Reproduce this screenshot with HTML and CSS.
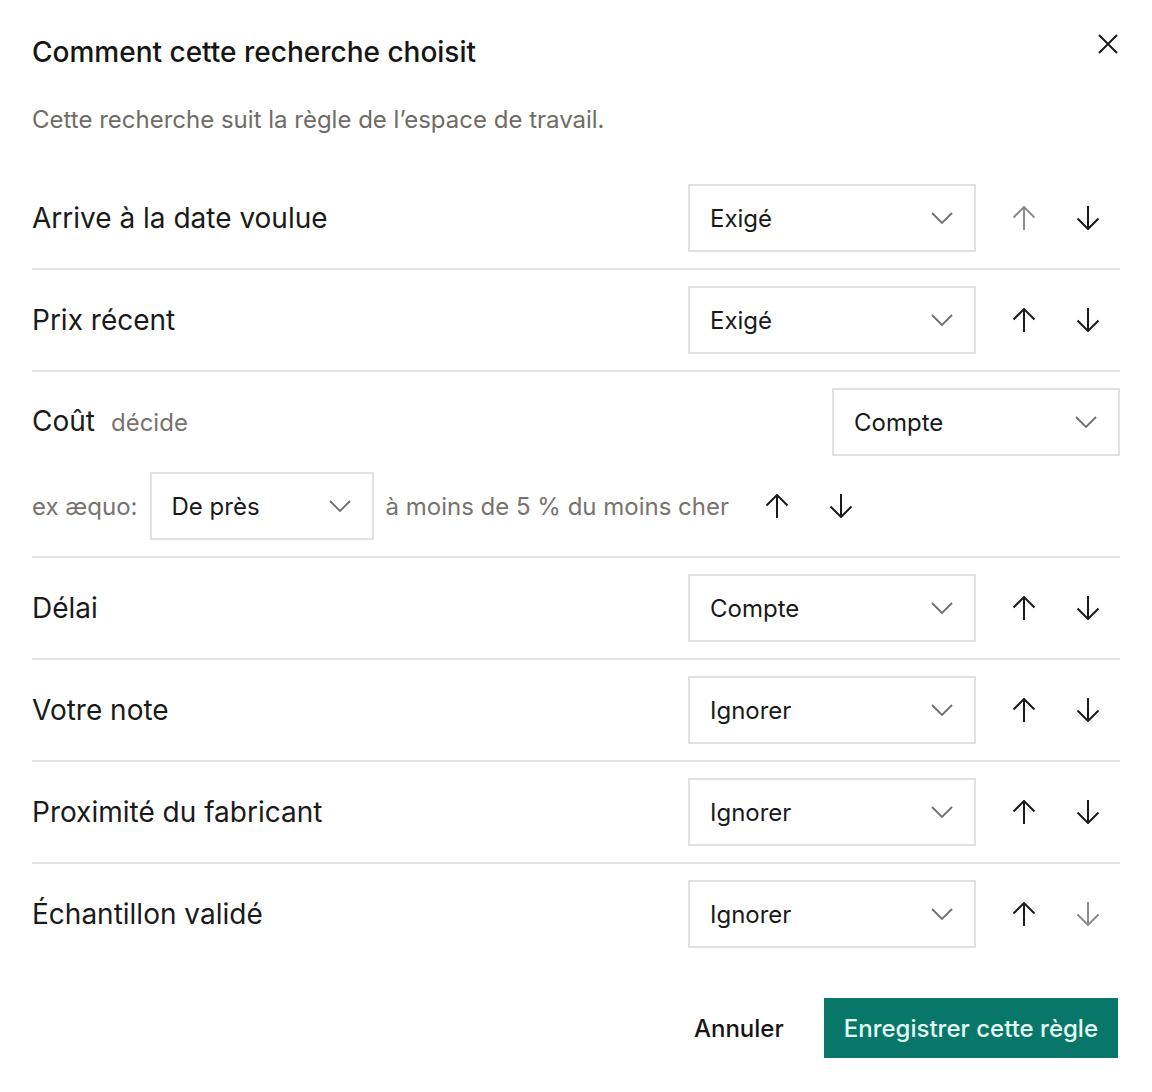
FILE: index.html
```html
<!DOCTYPE html>
<html lang="fr">
<head>
<meta charset="utf-8">
<title>Comment cette recherche choisit</title>
<link rel="stylesheet" href="styles.css">
</head>
<body>
<div class="dialog">
  <div class="header">
    <h2 class="title">Comment cette recherche choisit</h2>
    <button class="close" aria-label="Fermer">
      <svg width="20" height="20" viewBox="0 0 20 20"><path d="M1 1L19 19M19 1L1 19" stroke="#1a1a1a" stroke-width="2" fill="none"/></svg>
    </button>
  </div>
  <p class="subtitle">Cette recherche suit la règle de l’espace de travail.</p>

  <div class="rules">
    <div class="row">
      <span class="label">Arrive à la date voulue</span>
      <div class="controls">
        <div class="select"><span>Exigé</span><svg class="chev" width="22" height="12" viewBox="0 0 22 12"><polyline points="1,1 11,11 21,1" fill="none" stroke="#6f6f6f" stroke-width="1.8"/></svg></div>
        <div class="arrows">
          <button class="arrow disabled"><svg width="24" height="24" viewBox="0 0 24 24"><path d="M12 1V24M1.5 11.5L12 1L22.5 11.5" fill="none" stroke="currentColor" stroke-width="2"/></svg></button>
          <button class="arrow"><svg width="24" height="24" viewBox="0 0 24 24"><path d="M12 0V23M1.5 12.5L12 23L22.5 12.5" fill="none" stroke="currentColor" stroke-width="2"/></svg></button>
        </div>
      </div>
    </div>

    <div class="row">
      <span class="label">Prix récent</span>
      <div class="controls">
        <div class="select"><span>Exigé</span><svg class="chev" width="22" height="12" viewBox="0 0 22 12"><polyline points="1,1 11,11 21,1" fill="none" stroke="#6f6f6f" stroke-width="1.8"/></svg></div>
        <div class="arrows">
          <button class="arrow"><svg width="24" height="24" viewBox="0 0 24 24"><path d="M12 1V24M1.5 11.5L12 1L22.5 11.5" fill="none" stroke="currentColor" stroke-width="2"/></svg></button>
          <button class="arrow"><svg width="24" height="24" viewBox="0 0 24 24"><path d="M12 0V23M1.5 12.5L12 23L22.5 12.5" fill="none" stroke="currentColor" stroke-width="2"/></svg></button>
        </div>
      </div>
    </div>

    <div class="row row-cost">
      <div class="cost-head">
        <span class="label label-cost">Coût <span class="hint">décide</span></span>
        <div class="select"><span>Compte</span><svg class="chev" width="22" height="12" viewBox="0 0 22 12"><polyline points="1,1 11,11 21,1" fill="none" stroke="#6f6f6f" stroke-width="1.8"/></svg></div>
      </div>
      <div class="tie">
        <span class="muted">ex æquo:</span>
        <div class="select select-sm"><span>De près</span><svg class="chev" width="22" height="12" viewBox="0 0 22 12"><polyline points="1,1 11,11 21,1" fill="none" stroke="#6f6f6f" stroke-width="1.8"/></svg></div>
        <span class="muted tie-text">à moins de 5 % du moins cher</span>
        <div class="arrows">
          <button class="arrow"><svg width="24" height="24" viewBox="0 0 24 24"><path d="M12 1V24M1.5 11.5L12 1L22.5 11.5" fill="none" stroke="currentColor" stroke-width="2"/></svg></button>
          <button class="arrow"><svg width="24" height="24" viewBox="0 0 24 24"><path d="M12 0V23M1.5 12.5L12 23L22.5 12.5" fill="none" stroke="currentColor" stroke-width="2"/></svg></button>
        </div>
      </div>
    </div>

    <div class="row">
      <span class="label">Délai</span>
      <div class="controls">
        <div class="select"><span>Compte</span><svg class="chev" width="22" height="12" viewBox="0 0 22 12"><polyline points="1,1 11,11 21,1" fill="none" stroke="#6f6f6f" stroke-width="1.8"/></svg></div>
        <div class="arrows">
          <button class="arrow"><svg width="24" height="24" viewBox="0 0 24 24"><path d="M12 1V24M1.5 11.5L12 1L22.5 11.5" fill="none" stroke="currentColor" stroke-width="2"/></svg></button>
          <button class="arrow"><svg width="24" height="24" viewBox="0 0 24 24"><path d="M12 0V23M1.5 12.5L12 23L22.5 12.5" fill="none" stroke="currentColor" stroke-width="2"/></svg></button>
        </div>
      </div>
    </div>

    <div class="row">
      <span class="label">Votre note</span>
      <div class="controls">
        <div class="select"><span>Ignorer</span><svg class="chev" width="22" height="12" viewBox="0 0 22 12"><polyline points="1,1 11,11 21,1" fill="none" stroke="#6f6f6f" stroke-width="1.8"/></svg></div>
        <div class="arrows">
          <button class="arrow"><svg width="24" height="24" viewBox="0 0 24 24"><path d="M12 1V24M1.5 11.5L12 1L22.5 11.5" fill="none" stroke="currentColor" stroke-width="2"/></svg></button>
          <button class="arrow"><svg width="24" height="24" viewBox="0 0 24 24"><path d="M12 0V23M1.5 12.5L12 23L22.5 12.5" fill="none" stroke="currentColor" stroke-width="2"/></svg></button>
        </div>
      </div>
    </div>

    <div class="row">
      <span class="label">Proximité du fabricant</span>
      <div class="controls">
        <div class="select"><span>Ignorer</span><svg class="chev" width="22" height="12" viewBox="0 0 22 12"><polyline points="1,1 11,11 21,1" fill="none" stroke="#6f6f6f" stroke-width="1.8"/></svg></div>
        <div class="arrows">
          <button class="arrow"><svg width="24" height="24" viewBox="0 0 24 24"><path d="M12 1V24M1.5 11.5L12 1L22.5 11.5" fill="none" stroke="currentColor" stroke-width="2"/></svg></button>
          <button class="arrow"><svg width="24" height="24" viewBox="0 0 24 24"><path d="M12 0V23M1.5 12.5L12 23L22.5 12.5" fill="none" stroke="currentColor" stroke-width="2"/></svg></button>
        </div>
      </div>
    </div>

    <div class="row row-last">
      <span class="label">Échantillon validé</span>
      <div class="controls">
        <div class="select"><span>Ignorer</span><svg class="chev" width="22" height="12" viewBox="0 0 22 12"><polyline points="1,1 11,11 21,1" fill="none" stroke="#6f6f6f" stroke-width="1.8"/></svg></div>
        <div class="arrows">
          <button class="arrow"><svg width="24" height="24" viewBox="0 0 24 24"><path d="M12 1V24M1.5 11.5L12 1L22.5 11.5" fill="none" stroke="currentColor" stroke-width="2"/></svg></button>
          <button class="arrow disabled"><svg width="24" height="24" viewBox="0 0 24 24"><path d="M12 0V23M1.5 12.5L12 23L22.5 12.5" fill="none" stroke="currentColor" stroke-width="2"/></svg></button>
        </div>
      </div>
    </div>
  </div>

  <div class="footer">
    <button class="btn btn-ghost">Annuler</button>
    <button class="btn btn-primary">Enregistrer cette règle</button>
  </div>
</div>
</body>
</html>
```
FILE: styles.css
```css
* { box-sizing: border-box; }

html, body {
  margin: 0;
  padding: 0;
  background: #ffffff;
}

body {
  font-family: Inter, "Noto Sans", "Liberation Sans", sans-serif;
  color: #1a1a1a;
}

.dialog {
  padding: 34px 32px 34px 32px;
}

.header {
  display: flex;
  justify-content: space-between;
  align-items: flex-start;
}

.title {
  margin: 0;
  font-size: 28px;
  line-height: 36px;
  font-weight: 500;
  color: #161616;
}

.close {
  border: 0;
  background: none;
  padding: 0;
  margin: 0 2px 0 0;
  width: 20px;
  height: 20px;
  display: flex;
  cursor: pointer;
}

.subtitle {
  margin: 34px 0 32px 0;
  font-size: 24px;
  line-height: 32px;
  color: #6f6c67;
}

.rules {
  display: flex;
  flex-direction: column;
}

.row {
  display: flex;
  align-items: center;
  justify-content: space-between;
  padding: 16px 0;
  border-bottom: 2px solid #e4e3df;
}

.row-last {
  border-bottom: 0;
}

.label {
  font-size: 28px;
  line-height: 36px;
  color: #1a1a1a;
}

.label-cost {
  display: flex;
  align-items: baseline;
  gap: 16px;
}

.hint {
  font-size: 24px;
  color: #77736e;
}

.controls {
  display: flex;
  align-items: center;
  gap: 16px;
}

.select {
  width: 288px;
  height: 68px;
  border: 2px solid #e2e1dd;
  display: flex;
  align-items: center;
  justify-content: space-between;
  padding: 0 21px 0 20px;
  font-size: 24px;
  color: #1a1a1a;
  background: #fff;
}

.select-sm {
  width: 224px;
}

.chev {
  flex: none;
}

.arrows {
  display: flex;
}

.arrow {
  width: 64px;
  height: 48px;
  border: 0;
  background: none;
  padding: 0;
  display: flex;
  align-items: center;
  justify-content: center;
  color: #1a1a1a;
  cursor: pointer;
}

.arrow.disabled {
  color: #8c8c8c;
}

.row-cost {
  flex-direction: column;
  align-items: stretch;
}

.cost-head {
  display: flex;
  align-items: center;
  justify-content: space-between;
}

.tie {
  display: flex;
  align-items: center;
  gap: 12px;
  margin-top: 16px;
}

.muted {
  font-size: 24px;
  color: #77736e;
}

.tie-text {
  margin-right: 4px;
}

.footer {
  display: flex;
  justify-content: flex-end;
  gap: 20px;
  margin-top: 34px;
  padding-right: 2px;
}

.btn {
  height: 60px;
  border: 0;
  padding: 0 20px;
  font-family: inherit;
  font-size: 24px;
  font-weight: 500;
  cursor: pointer;
}

.btn-ghost {
  background: none;
  color: #161616;
}

.btn-primary {
  background: #08776a;
  color: #e3fbf2;
}
```
